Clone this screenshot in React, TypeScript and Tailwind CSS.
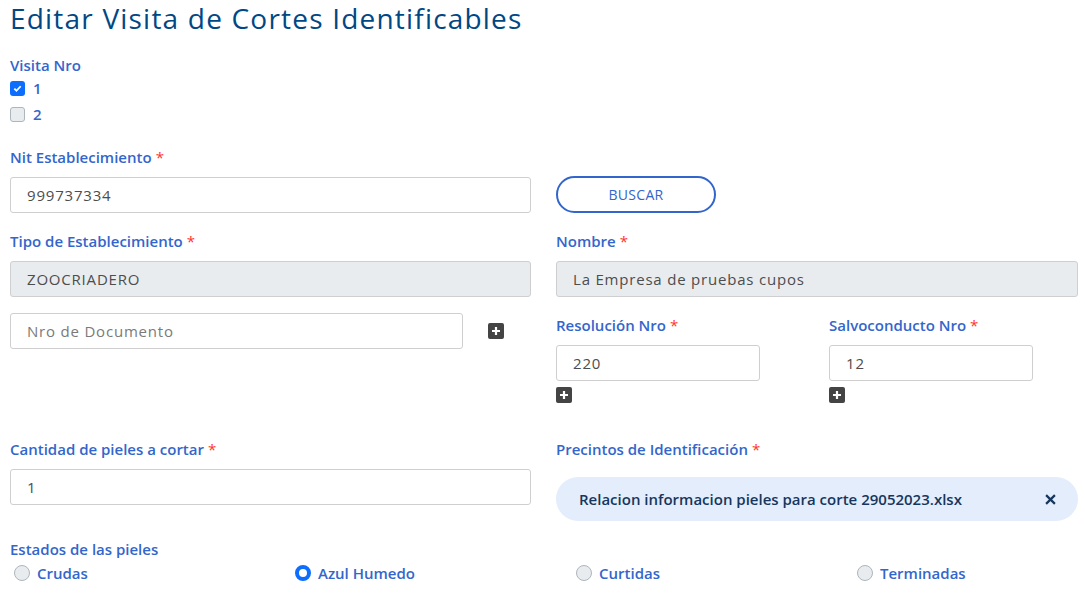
import React from "react";

const labelCls =
  "block text-[15px] leading-[20px] font-semibold text-[#3366cc] font-['Open_Sans',sans-serif]";
const inputCls =
  "h-[36px] rounded-[3px] border border-[#cfcfcf] bg-white px-4 text-[15px] tracking-[0.8px] text-[#4d4d4d] font-['Open_Sans',sans-serif] outline-none placeholder:text-[#7a7a7a]";
const readOnlyCls =
  "h-[36px] w-full rounded-[3px] border border-[#cfcfcf] bg-[#e9ecef] px-4 text-[15px] tracking-[0.8px] text-[#4d4d4d] font-['Open_Sans',sans-serif] outline-none";

const Label = ({ text, required = false }: { text: string; required?: boolean }) => (
  <label className={labelCls}>
    {text}
    {required ? <span className="ml-1 font-normal text-[#ff3333]">*</span> : null}
  </label>
);

const PlusBox = () => (
  <span className="flex h-[16px] w-[16px] items-center justify-center rounded-[2px] bg-[#444444]">
    <svg width="10" height="10" viewBox="0 0 10 10">
      <path d="M5 1v8M1 5h8" stroke="#fff" strokeWidth="2.2" />
    </svg>
  </span>
);

const Check = ({ checked, text }: { checked: boolean; text: string }) => (
  <div className="flex h-[20px] items-center gap-[8px]">
    {checked ? (
      <span className="flex h-[15px] w-[15px] items-center justify-center rounded-[3px] bg-[#0d6efd]">
        <svg width="9" height="9" viewBox="0 0 10 10">
          <path d="M1.5 5.2l2.3 2.3L8.5 2.5" stroke="#fff" strokeWidth="2" fill="none" />
        </svg>
      </span>
    ) : (
      <span className="h-[15px] w-[15px] rounded-[3px] border border-[#adb5bd] bg-[#e9ecef]" />
    )}
    <span className={labelCls}>{text}</span>
  </div>
);

const Radio = ({ checked, text }: { checked: boolean; text: string }) => (
  <div className="flex h-[20px] items-center gap-[7px] pl-[4px]">
    {checked ? (
      <span className="h-[16px] w-[16px] rounded-full border-[4px] border-[#0d6efd] bg-white" />
    ) : (
      <span className="h-[16px] w-[16px] rounded-full border border-[#adb5bd] bg-[#e9ecef]" />
    )}
    <span className={labelCls}>{text}</span>
  </div>
);

export default function App() {
  return (
    <div className="min-h-[594px] w-[1085px] overflow-hidden bg-white pl-[10px]">
      <h1 className="h-[36px] text-[28px] leading-[36px] tracking-[1.2px] text-[#004884] font-['Open_Sans',sans-serif]">
        Editar Visita de Cortes Identificables
      </h1>

      <div className="mt-[19px]">
        <Label text="Visita Nro" />
        <div className="mt-[3px]">
          <Check checked text="1" />
        </div>
        <div className="mt-[6px]">
          <Check checked={false} text="2" />
        </div>
      </div>

      <div className="mt-[23px] grid grid-cols-[521px_522px] items-end gap-x-[25px]">
        <div>
          <Label text="Nit Establecimiento" required />
          <input className={`${inputCls} mt-[10px] w-full`} defaultValue="999737334" />
        </div>
        <div>
          <button className="h-[37px] w-[160px] rounded-full border-2 border-[#3366cc] text-[14px] tracking-[0.3px] text-[#3366cc] font-['Open_Sans',sans-serif]">
            BUSCAR
          </button>
        </div>
      </div>

      <div className="mt-[18px] grid grid-cols-[521px_522px] gap-x-[25px]">
        <div>
          <Label text="Tipo de Establecimiento" required />
          <input className={`${readOnlyCls} mt-[10px]`} defaultValue="ZOOCRIADERO" readOnly />
        </div>
        <div>
          <Label text="Nombre" required />
          <input
            className={`${readOnlyCls} mt-[10px]`}
            defaultValue="La Empresa de pruebas cupos"
            readOnly
          />
        </div>
      </div>

      <div className="mt-[16px] grid grid-cols-[521px_522px] items-start gap-x-[25px]">
        <div className="flex items-center gap-[25px]">
          <input className={`${inputCls} w-[453px]`} placeholder="Nro de Documento" />
          <PlusBox />
        </div>
        <div className="grid grid-cols-[273px_249px] pt-[2px]">
          <div>
            <Label text="Resolución Nro" required />
            <input className={`${inputCls} mt-[10px] w-[204px]`} defaultValue="220" />
            <div className="mt-[6px]">
              <PlusBox />
            </div>
          </div>
          <div>
            <Label text="Salvoconducto Nro" required />
            <input className={`${inputCls} mt-[10px] w-[204px]`} defaultValue="12" />
            <div className="mt-[6px]">
              <PlusBox />
            </div>
          </div>
        </div>
      </div>

      <div className="mt-[36px] grid grid-cols-[521px_522px] items-start gap-x-[25px]">
        <div>
          <Label text="Cantidad de pieles a cortar" required />
          <input className={`${inputCls} mt-[10px] w-full`} defaultValue="1" />
        </div>
        <div>
          <Label text="Precintos de Identificación" required />
          <div className="mt-[18px] flex h-[44px] items-center justify-between rounded-full bg-[#e3edfc] pl-[23px] pr-[22px]">
            <span className="text-[15px] font-semibold text-[#17365d] font-['Open_Sans',sans-serif]">
              Relacion informacion pieles para corte 29052023.xlsx
            </span>
            <svg width="11" height="11" viewBox="0 0 10 10">
              <path d="M1 1l8 8M9 1l-8 8" stroke="#17365d" strokeWidth="2" />
            </svg>
          </div>
        </div>
      </div>

      <div className="mt-[18px]">
        <Label text="Estados de las pieles" />
        <div className="mt-[4px] grid grid-cols-[281px_281px_281px_281px]">
          <Radio checked={false} text="Crudas" />
          <Radio checked text="Azul Humedo" />
          <Radio checked={false} text="Curtidas" />
          <Radio checked={false} text="Terminadas" />
        </div>
      </div>
    </div>
  );
}
